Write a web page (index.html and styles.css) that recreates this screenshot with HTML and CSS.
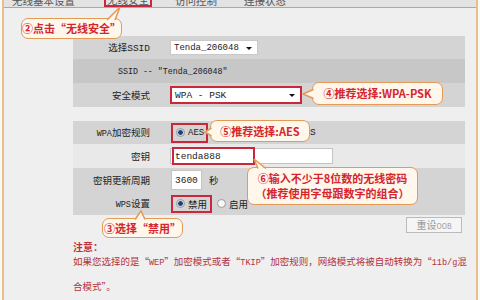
FILE: index.html
```html
<!DOCTYPE html>
<html lang="zh">
<head>
    <meta charset="UTF-8">
    <meta name="viewport" content="width=device-width, initial-scale=1.0">
    <title>无线安全</title>
    <link rel="stylesheet" href="styles.css">
</head>
<body>
    <div class="frame">
        <div class="tabs">
            <span class="tab t1">无线基本设置</span>
            <span class="tab t2">无线安全</span>
            <span class="tab t3">访问控制</span>
            <span class="tab t4">连接状态</span>
        </div>
        <div class="main">
            <div class="block">
                <div class="row shade h23">
                    <span class="label">选择<span class="mono">SSID</span></span>
                    <span class="select ssid"><span class="mono">Tenda_206048</span><i class="arrow"></i></span>
                </div>
                <div class="row dark single mono">SSID -- "Tenda_206048"</div>
                <div class="row shade">
                    <span class="label">安全模式</span>
                    <span class="select mode"><span class="mono">WPA - PSK</span><i class="arrow"></i></span>
                </div>
            </div>
            <div class="block second">
                <div class="row shade h23">
                    <span class="label"><span class="mono sm">WPA</span>加密规则</span>
                    <span class="mark aes"><i class="radio on"></i><span class="mono">AES</span></span>
                    <span class="opt far"><i class="radio"></i><span class="mono">TKIP&amp;AES</span></span>
                </div>
                <div class="row light">
                    <span class="label">密钥</span>
                    <span class="field pw"><span class="pw-mark mono">tenda888</span></span>
                </div>
                <div class="row shade">
                    <span class="label">密钥更新周期</span>
                    <span class="field period mono">3600</span>
                    <span class="unit">秒</span>
                </div>
                <div class="row shade h23">
                    <span class="label"><span class="mono sm">WPS</span>设置</span>
                    <span class="mark wps"><i class="radio on"></i>禁用</span>
                    <span class="opt"><i class="radio"></i>启用</span>
                </div>
            </div>
            <div class="btn-row">
                <button class="reset">重设<span class="small">OOB</span></button>
            </div>
            <div class="note">注意：</div>
            <p class="note-text">如果您选择的是“<span class="mono sm">WEP</span>”加密模式或者“<span class="mono sm">TKIP</span>”加密规则，网络模式将被自动转换为“<span class="mono sm">11b/g</span>混<br>合模式”。</p>
        </div>
    </div>

    <div class="tip tip-2">②点击“无线安全”
        <svg class="tail" style="left:82px;top:-13px" width="20" height="16"><polygon points="3,15 16,1 11,15" fill="#fff6ec"/><polyline points="3,14 16,1 11,14" fill="none" stroke="#e29a55" stroke-width="1.5"/></svg>
    </div>
    <div class="tip tip-4">④推荐选择:WPA-PSK
        <svg class="tail" style="left:-11px;top:5px" width="14" height="13"><polygon points="1,6 13,1 13,11" fill="#fff6ec"/><polyline points="11.5,1.5 1,6 11.5,10.5" fill="none" stroke="#e29a55" stroke-width="1.5"/></svg>
    </div>
    <div class="tip tip-5">⑤推荐选择:AES
        <svg class="tail" style="left:-7px;top:5px" width="10" height="13"><polygon points="1,6 9,1 9,11" fill="#fff6ec"/><polyline points="7.5,2 1,6 7.5,10" fill="none" stroke="#e29a55" stroke-width="1.5"/></svg>
    </div>
    <div class="tip tip-6">⑥输入不少于8位数的无线密码<br>（推荐使用字母跟数字的组合）
        <svg class="tail" style="left:4px;top:-11px" width="16" height="13"><polygon points="6,13 2,2 14,13" fill="#fff6ec"/><polyline points="6,11.5 2,2 14,11.5" fill="none" stroke="#e29a55" stroke-width="1.5"/></svg>
    </div>
    <div class="tip tip-3">③选择“禁用”
        <svg class="tail" style="left:30px;top:-9px" width="14" height="11"><polygon points="2,11 8,1 12,11" fill="#fff6ec"/><polyline points="2,9.5 8,1 12,9.5" fill="none" stroke="#e29a55" stroke-width="1.5"/></svg>
    </div>
</body>
</html>
```

FILE: styles.css
```css
html {
    background: #f9f9f9;
}
body {
    margin: 0;
    position: relative;
    height: 300px;
    overflow: hidden;
    font-family: "Noto Sans CJK SC", sans-serif;
    font-size: 9.5px;
    color: #222;
}
.frame {
    margin-left: 2px;
    width: 472px;
    height: 300px;
    border-left: 2px solid #e8c08c;
    border-right: 2px solid #e8c08c;
    background: #efefef;
}
.tabs {
    display: flex;
    align-items: flex-end;
    height: 7px;
    overflow: hidden;
    background: #e3e3e3;
    border-bottom: 1px solid #a9a9a9;
    padding-left: 8px;
    font-size: 10.5px;
    color: #555;
}
.tab {
    line-height: 12px;
}
.t2 {
    margin-left: 29px;
    border: 2px solid #c8283a;
    padding: 0 1px;
    line-height: 10px;
}
.t3 {
    margin-left: 23px;
}
.t4 {
    margin-left: 27px;
}
.main {
    padding: 28px 11px 0 69px;
}
.mono {
    font-family: "Liberation Mono", monospace;
}
.sm {
    font-size: 8.5px;
}
.row {
    display: flex;
    align-items: center;
    height: 24px;
}
.h23 {
    height: 23px;
}
.shade {
    background: #d4d4d4;
}
.dark {
    background: #c7c7c7;
}
.light {
    background: #e9e9e9;
}
.single {
    padding-left: 45px;
    font-size: 8.3px;
    color: #222;
}
.label {
    width: 77px;
    margin-right: 20px;
    text-align: right;
    line-height: 12px;
}
.second {
    margin-top: 14px;
}
.select {
    position: relative;
    display: flex;
    align-items: center;
    box-sizing: border-box;
    background: #fff;
    padding-left: 3px;
}
.ssid {
    width: 88px;
    height: 15px;
    border: 1px solid #c9c9c9;
    font-size: 9px;
}
.mode {
    width: 132px;
    height: 18px;
    border: 2px solid #c8283a;
    font-size: 9.5px;
}
.arrow {
    position: absolute;
    right: 5px;
    top: 50%;
    margin-top: -1px;
    border-left: 3px solid transparent;
    border-right: 3px solid transparent;
    border-top: 3px solid #111;
}
.radio {
    flex-shrink: 0;
    display: inline-block;
    width: 7px;
    height: 7px;
    border-radius: 50%;
    border: 1px solid #9a9a9a;
    background: #f6f6f6;
    margin-right: 3px;
}
.radio.on {
    background: radial-gradient(circle, #1d3f7a 0 2px, #b9c3d4 2.5px, #eef0f4 4px);
}
.mark {
    display: flex;
    align-items: center;
    box-sizing: border-box;
    border: 2px solid #c8283a;
    padding-left: 3px;
}
.aes {
    width: 37px;
    height: 20px;
    margin-left: 1px;
    font-size: 9px;
}
.wps {
    width: 41px;
    height: 18px;
    margin-left: 1px;
}
.opt {
    display: flex;
    align-items: center;
    margin-left: 5px;
}
.far {
    margin-left: 50px;
}
.field {
    box-sizing: border-box;
    background: #fff;
    border: 1px solid #c4c4c4;
    display: flex;
    align-items: center;
}
.pw {
    width: 163px;
    height: 16px;
}
.pw-mark {
    box-sizing: border-box;
    width: 83px;
    height: 18px;
    margin: 0 0 0 1px;
    border: 2px solid #c8283a;
    padding-left: 1px;
    display: flex;
    align-items: center;
}
.period {
    width: 31px;
    height: 20px;
    padding-left: 3px;
    margin-left: 1px;
}
.unit {
    margin-left: 7px;
}
.btn-row {
    display: flex;
    justify-content: flex-end;
    padding-right: 3px;
    margin-top: 2px;
}
.reset {
    width: 56px;
    height: 16px;
    padding: 0;
    background: #f5f5f5;
    border: 1px solid #bbb;
    color: #999;
    font-family: "Noto Sans CJK SC", sans-serif;
    font-size: 10px;
    line-height: 14px;
}
.reset .small {
    font-size: 7px;
}
.note {
    margin-top: 9px;
    color: #c0303a;
    font-weight: bold;
    font-size: 10px;
    line-height: 10px;
}
.note-text {
    margin: -2px 0 0;
    color: #b3323c;
    line-height: 23px;
    white-space: nowrap;
}
.tip {
    position: absolute;
    box-sizing: border-box;
    display: flex;
    align-items: center;
    justify-content: center;
    text-align: center;
    background: #fff6ec;
    border: 1.5px solid #e29a55;
    border-radius: 7px;
    color: #d4262c;
    font-weight: bold;
    font-size: 11px;
    line-height: 15px;
    white-space: nowrap;
}
.tail {
    position: absolute;
    overflow: visible;
}
.tip-2 {
    left: 21px;
    top: 18px;
    width: 101px;
    height: 21px;
}
.tip-4 {
    left: 312px;
    top: 82px;
    width: 131px;
    height: 23px;
}
.tip-5 {
    left: 210px;
    top: 120px;
    width: 100px;
    height: 22px;
}
.tip-6 {
    left: 247px;
    top: 167px;
    width: 171px;
    height: 38px;
}
.tip-3 {
    left: 102px;
    top: 218px;
    width: 81px;
    height: 20px;
}
```
